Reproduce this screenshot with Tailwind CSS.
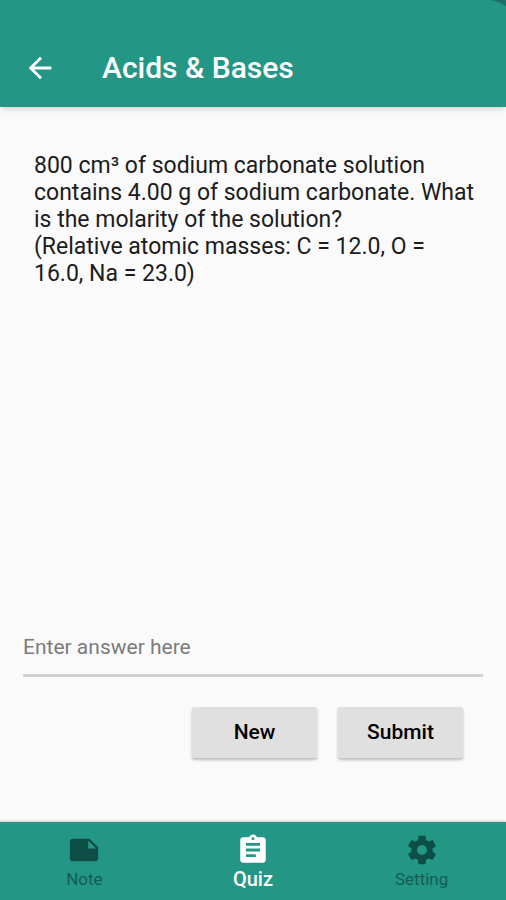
<!DOCTYPE html>
<html lang="en">
<head>
    <meta charset="UTF-8">
    <meta name="viewport" content="width=device-width, initial-scale=1.0">
    <title>Acids &amp; Bases</title>
    <script src="https://cdn.jsdelivr.net/npm/@tailwindcss/browser@4"></script>
</head>
<body class="bg-[#fafafa] font-['Roboto',sans-serif] text-[#1c1c1c]">
    <div class="flex flex-col min-h-screen">
        <!-- App bar -->
        <header class="relative overflow-hidden bg-[#239686] text-white shadow-md flex items-center gap-[45px] px-[23px] pt-7 h-[107px]">
            <button type="button" aria-label="Back">
                <svg class="w-[34px] h-[34px]" viewBox="0 0 24 24" fill="currentColor">
                    <path d="M20 11H7.83l5.59-5.59L12 4l-8 8 8 8 1.41-1.41L7.83 13H20v-2z"/>
                </svg>
            </button>
            <h1 class="text-[30px] font-medium">Acids &amp; Bases</h1>
            <!-- Corner ribbon -->
            <svg class="absolute top-0 right-0 w-4 h-[6px]" viewBox="0 0 16 6" fill="#1d6f6b">
                <path d="M1 0h15v6Q9 2 1 0z"/>
            </svg>
        </header>

        <!-- Question -->
        <main class="flex-1 flex flex-col px-[23px] pt-[45px] pb-16">
            <p class="flex-1 pl-[11px] pr-1 text-[23px] leading-[27px]">
                800 cm³ of sodium carbonate solution contains 4.00 g of sodium carbonate. What is the molarity of the solution?<br>
                (Relative atomic masses: C = 12.0, O = 16.0, Na = 23.0)
            </p>

            <form>
                <input type="text" aria-label="Enter answer here" placeholder="Enter answer here"
                       class="block w-full pb-[14px] border-b-3 border-[#d2d2d2] text-[21px] leading-[26px] placeholder:text-[#7b7b7b] outline-none">
                <div class="flex justify-end gap-[21px] mt-[30px] pr-5">
                    <button type="button" class="w-[125px] h-[51px] rounded-xs bg-[#e0e0e0] text-black text-[21px] font-medium shadow-[0_2px_3px_rgba(0,0,0,0.25)]">New</button>
                    <button type="submit" class="w-[125px] h-[51px] rounded-xs bg-[#e0e0e0] text-black text-[21px] font-medium shadow-[0_2px_3px_rgba(0,0,0,0.25)]">Submit</button>
                </div>
            </form>
        </main>

        <!-- Bottom navigation -->
        <nav class="grid grid-cols-3 h-[78px] pt-[11px] bg-[#239686] text-[#125e54] text-[17px] leading-6 shadow-[0_-1px_2px_rgba(0,0,0,0.2)]">
            <a href="#" class="flex flex-col items-center">
                <svg class="w-[34px] h-[34px] text-[#0d4f46]" viewBox="0 0 24 24" fill="currentColor">
                    <path d="M22 10l-6-6H4c-1.1 0-2 .9-2 2v12.01c0 1.1.9 1.99 2 1.99l16-.01c1.1 0 2-.89 2-1.99v-8zm-7-4.5l5.5 5.5H15V5.5z"/>
                </svg>
                Note
            </a>
            <a href="#" class="flex flex-col items-center text-white text-[20px] leading-6 font-medium">
                <svg class="w-[34px] h-[34px]" viewBox="0 0 24 24" fill="currentColor">
                    <path d="M19 3h-4.18C14.4 1.84 13.3 1 12 1c-1.3 0-2.4.84-2.82 2H5c-1.1 0-2 .9-2 2v14c0 1.1.9 2 2 2h14c1.1 0 2-.9 2-2V5c0-1.1-.9-2-2-2zm-7 0c.55 0 1 .45 1 1s-.45 1-1 1-1-.45-1-1 .45-1 1-1zm2 14H7v-2h7v2zm3-4H7v-2h10v2zm0-4H7V7h10v2z"/>
                </svg>
                Quiz
            </a>
            <a href="#" class="flex flex-col items-center">
                <svg class="w-[34px] h-[34px] text-[#0d4f46]" viewBox="0 0 24 24" fill="currentColor">
                    <path d="M19.43 12.98c.04-.32.07-.64.07-.98s-.03-.66-.07-.98l2.11-1.65c.19-.15.24-.42.12-.64l-2-3.46c-.12-.22-.39-.3-.61-.22l-2.49 1c-.52-.4-1.08-.73-1.69-.98l-.38-2.65C14.46 2.18 14.25 2 14 2h-4c-.25 0-.46.18-.49.42l-.38 2.65c-.61.25-1.17.59-1.69.98l-2.49-1c-.23-.09-.49 0-.61.22l-2 3.46c-.13.22-.07.49.12.64l2.11 1.65c-.04.32-.07.65-.07.98s.03.66.07.98l-2.11 1.65c-.19.15-.24.42-.12.64l2 3.46c.12.22.39.3.61.22l2.49-1c.52.4 1.08.73 1.69.98l.38 2.65c.03.24.24.42.49.42h4c.25 0 .46-.18.49-.42l.38-2.65c.61-.25 1.17-.59 1.69-.98l2.49 1c.23.09.49 0 .61-.22l2-3.46c.12-.22.07-.49-.12-.64l-2.11-1.65zM12 15.5c-1.93 0-3.5-1.57-3.5-3.5s1.57-3.5 3.5-3.5 3.5 1.57 3.5 3.5-1.57 3.5-3.5 3.5z"/>
                </svg>
                Setting
            </a>
        </nav>
    </div>
</body>
</html>
